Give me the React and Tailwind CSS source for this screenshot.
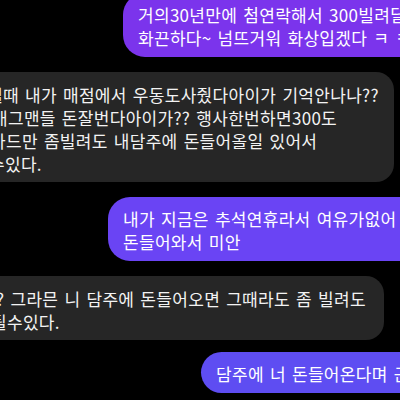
const FONT = { fontFamily: '"Noto Sans CJK KR", "Noto Sans", sans-serif' };

const Sent = ({ lines, className }) => (
  <div
    className={`self-start whitespace-nowrap rounded-l-[22px] pt-[10px] pb-[8px] pl-[15px] pr-[40px] text-[17px] leading-[23px] tracking-[0.3px] [word-spacing:2px] text-white ${className}`}
  >
    {lines.map((l, i) => (
      <div key={i}>{l}</div>
    ))}
  </div>
);

const Received = ({ lines, className }) => (
  <div
    className={`self-start whitespace-nowrap rounded-[18px] bg-[#262626] pt-[11px] pb-[7px] pl-[14px] text-[17px] leading-[23px] tracking-[0.3px] [word-spacing:2px] text-[#f3f3f3] ${className}`}
  >
    {lines.map(([text, indent], i) => (
      <div key={i} className={indent}>
        {text}
      </div>
    ))}
  </div>
);

export default function App() {
  return (
    <div
      className="flex h-[400px] w-[400px] flex-col gap-[15px] overflow-hidden bg-black"
      style={FONT}
    >
      <Sent
        className="-mt-[7px] ml-[123px] bg-[#7b34ec]"
        lines={["거의30년만에 첨연락해서 300빌려달라고", "화끈하다~ 넘뜨거워 화상입겠다 ㅋ ㅋ"]}
      />
      <Received
        className="-ml-[30px] pr-[15px]"
        lines={[
          ["떨때 내가 매점에서 우동도사줬다아이가 기억안나나??", "ml-[3px]"],
          ["개그맨들 돈잘번다아이가?? 행사한번하면300도", "ml-[8px]"],
          ["카드만 좀빌려도 내담주에 돈들어올일 있어서", "ml-[6px]"],
          ["수있다.", "ml-[5px]"],
        ]}
      />
      <Sent
        className="ml-[108px] bg-[#6a44f4] pl-[14px]"
        lines={["내가 지금은 추석연휴라서 여유가없어 담주에", "돈들어와서 미안"]}
      />
      <Received
        className="-ml-[30px] pr-[18px]"
        lines={[
          ["? 그라믄 니 담주에 돈들어오면 그때라도 좀 빌려도", "ml-[12px]"],
          ["될수있다.", "ml-[7px]"],
        ]}
      />
      <Sent
        className="-mt-[3px] ml-[201px] bg-[#5e4df2] pl-[14px]"
        lines={["담주에 너 돈들어온다며 근데"]}
      />
    </div>
  );
}
